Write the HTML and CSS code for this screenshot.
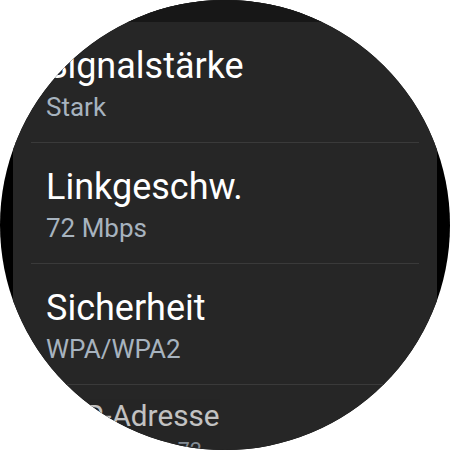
FILE: index.html
```
<!DOCTYPE html>
<html lang="de">
<head>
<meta charset="utf-8"/>
<title>WLAN-Details</title>
<link rel="stylesheet" href="styles.css">
</head>
<body>
<div class="watch">
	<div class="list">
		<div class="item item-prev"></div>

		<div class="item">
			<div class="title">Signalstärke</div>
			<div class="summary">Stark</div>
		</div>

		<div class="item">
			<div class="title">Linkgeschw.</div>
			<div class="summary">72 Mbps</div>
		</div>

		<div class="item">
			<div class="title">Sicherheit</div>
			<div class="summary">WPA/WPA2</div>
		</div>

		<div class="item item-edge">
			<div class="scaled">
				<div class="title">IP-Adresse</div>
				<div class="summary">192.168.0.72</div>
			</div>
		</div>
	</div>
</div>
</body>
</html>
```

FILE: styles.css
```
html, body {
	margin: 0;
	background: #fff;
}
body {
	font-family: Roboto, "Noto Sans", sans-serif;
}
.watch {
	width: 450px;
	height: 450px;
	border-radius: 50%;
	background: #000;
	overflow: hidden;
}
.list {
	margin: 0 13px;
	height: 450px;
	background: #262626;
}
.item {
	height: 120px;
	padding: 0 33px;
	border-bottom: 1px solid #262626;
	position: relative;
}
.item::after {
	content: "";
	position: absolute;
	left: 18px;
	right: 18px;
	bottom: -1px;
	height: 1px;
	background: #3a3a3a;
}
.item-prev {
	height: 22px;
	background: #171717;
	border-bottom: 0;
}
.item-prev::after,
.item-edge::after {
	display: none;
}
.title {
	padding-top: 24px;
	font-size: 36px;
	line-height: 41px;
	color: #fff;
	white-space: nowrap;
}
.summary {
	margin-top: 5px;
	font-size: 26px;
	line-height: 30px;
	color: #a7b3bf;
	white-space: nowrap;
}
.item-edge {
	padding: 0;
}
.scaled {
	padding: 0 33px;
	transform: scale(0.825);
	transform-origin: 207px -28px;
	opacity: 0.72;
}
```
